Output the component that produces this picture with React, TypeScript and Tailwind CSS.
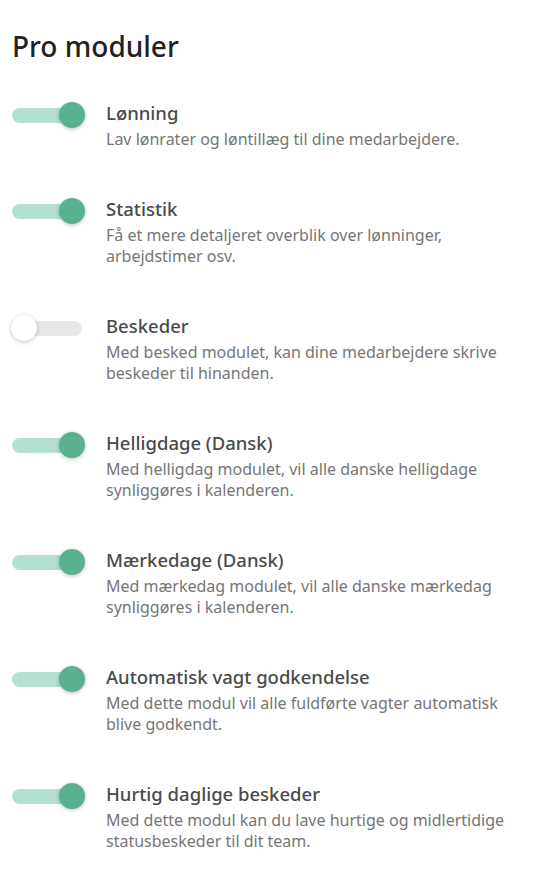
const modules = [
  { title: 'Lønning', desc: 'Lav lønrater og løntillæg til dine medarbejdere.', on: true },
  { title: 'Statistik', desc: 'Få et mere detaljeret overblik over lønninger, arbejdstimer osv.', on: true },
  { title: 'Beskeder', desc: 'Med besked modulet, kan dine medarbejdere skrive beskeder til hinanden.', on: false },
  { title: 'Helligdage (Dansk)', desc: 'Med helligdag modulet, vil alle danske helligdage synliggøres i kalenderen.', on: true },
  { title: 'Mærkedage (Dansk)', desc: 'Med mærkedag modulet, vil alle danske mærkedag synliggøres i kalenderen.', on: true },
  { title: 'Automatisk vagt godkendelse', desc: 'Med dette modul vil alle fuldførte vagter automatisk blive godkendt.', on: true },
  { title: 'Hurtig daglige beskeder', desc: 'Med dette modul kan du lave hurtige og midlertidige statusbeskeder til dit team.', on: true },
]

function Toggle({ on }: { on: boolean }) {
  return (
    <div className="relative w-[70px] h-[26px] flex items-center">
      <div className={`w-full h-[15px] rounded-full ${on ? 'bg-[#b4e0d1]' : 'bg-[#e8e8e8]'}`} />
      <div
        className={`absolute top-0 w-[26px] h-[26px] rounded-full shadow-[0_1px_4px_rgba(0,0,0,0.25)] ${
          on ? 'right-[-3px] bg-[#5ab190]' : 'left-[-1px] bg-white'
        }`}
      />
    </div>
  )
}

export default function App() {
  return (
    <div className="min-h-screen bg-white px-3 pt-[27px] font-['Noto_Sans',sans-serif]">
      <h1 className="text-[28px] leading-[38px] text-[#222] font-medium">Pro moduler</h1>

      <div className="mt-[36px] flex flex-col gap-[47px]">
        {modules.map((m) => (
          <div key={m.title} className="flex">
            <div className="w-[94px] shrink-0 pt-[1px]">
              <Toggle on={m.on} />
            </div>
            <div className="flex-1 pr-[14px]">
              <div className="text-[18.5px] leading-[24px] font-medium text-[#4a4a4a]">{m.title}</div>
              <div className="mt-[4px] text-[16px] leading-[21px] text-[#767676]">{m.desc}</div>
            </div>
          </div>
        ))}
      </div>
    </div>
  )
}
